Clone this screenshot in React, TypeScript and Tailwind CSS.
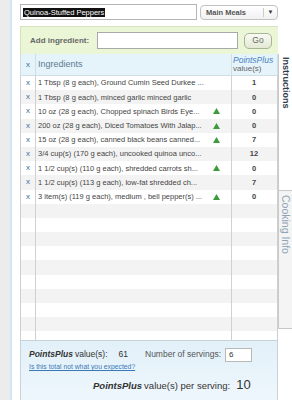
import React from "react";

type Row = { text: string; value: string; tri?: boolean };

const rows: Row[] = [
  { text: "1 Tbsp (8 g each), Ground Cumin Seed Durkee ...", value: "1" },
  { text: "1 Tbsp (8 g each), minced garlic minced garlic", value: "0" },
  { text: "10 oz (28 g each), Chopped spinach Birds Eye...", value: "0", tri: true },
  { text: "200 oz (28 g each), Diced Tomatoes With Jalap...", value: "0", tri: true },
  { text: "15 oz (28 g each), canned black beans canned...", value: "7", tri: true },
  { text: "3/4 cup(s) (170 g each), uncooked quinoa unco...", value: "12" },
  { text: "1 1/2 cup(s) (110 g each), shredded carrots sh...", value: "0", tri: true },
  { text: "1 1/2 cup(s) (113 g each), low-fat shredded ch...", value: "7" },
  { text: "3 item(s) (119 g each), medium , bell pepper(s) ...", value: "0", tri: true },
];

function Tri() {
  return (
    <svg width="7" height="6" viewBox="0 0 7 6" className="shrink-0">
      <polygon points="3.5,0 7,6 0,6" fill="#3d9b3d" />
    </svg>
  );
}

export default function App() {
  const empty = Array.from({ length: 10 });
  return (
    <div className="flex h-[400px] w-[292px] overflow-hidden bg-white font-['Liberation_Sans',Arial,sans-serif] text-[#444]">
      <div className="w-[10px] shrink-0 bg-[#ececec]" />
      <div className="w-[2px] shrink-0 bg-[#cfe7f5]" />
      <div className="w-[8px] shrink-0" />
      <div className="flex w-[272px] shrink-0 flex-col">
        {/* top row */}
        <div className="flex items-start pt-[4px]">
          <div className="flex h-[16px] w-[177px] items-center border border-[#b5b5b5] pl-[2px]">
            <span className="bg-[#111] px-[1px] text-[7.5px] leading-[9px] text-white">Quinoa-Stuffed Peppers</span>
          </div>
          <div className="ml-[3px] mt-[1px] flex h-[15px] w-[78px] items-center rounded-[4px] border border-[#c2c2c2] bg-gradient-to-b from-white to-[#f1f1f1]">
            <span className="flex-1 pl-[5px] text-[7.5px] font-bold text-[#555]">Main Meals</span>
            <div className="h-[9px] w-px bg-[#ccc]" />
            <span className="w-[13px] text-center text-[6px] text-[#333]">▼</span>
          </div>
        </div>
        {/* add ingredient */}
        <div className="mt-[6px] flex h-[28px] w-[258px] items-center border-l border-t border-[#d5e3bf] bg-[#ebf6d6]">
          <span className="ml-[9px] w-[67px] text-[8px] font-bold text-[#666]">Add ingredient:</span>
          <div className="h-[17px] w-[141px] border border-[#a9a9a9] bg-white" />
          <div className="ml-[6px] flex h-[16px] w-[28px] items-center justify-center rounded-[5px] border border-[#a8b39a] bg-gradient-to-b from-[#fafaf3] to-[#e2e9d4] text-[8.5px] text-[#666]">
            Go
          </div>
        </div>
        {/* table + tabs */}
        <div className="flex flex-1">
          <div className="flex w-[258px] flex-col">
            {/* header */}
            <div className="flex h-[22px] border-x border-b border-[#cfdde5] bg-[#e5f3fb]">
              <div className="flex w-[15px] items-center justify-center border-r border-[#cfdde5] text-[8px] text-[#3a6fa5]">x</div>
              <div className="flex w-[196px] items-center border-r border-[#cfdde5] pl-[2px] text-[9px] text-[#5d7d90]">Ingredients</div>
              <div className="flex flex-1 flex-col justify-center pl-[1px] leading-[8.5px]">
                <span className="text-[8.5px] italic text-[#4a84c0]">PointsPlus</span>
                <span className="text-[8px] text-[#666]">value(s)</span>
              </div>
            </div>
            {/* body */}
            <div className="flex h-[264px] flex-col overflow-hidden border-x border-[#cfcfcf]">
              {rows.map((r, i) => (
                <div key={i} className={`flex h-[14.2px] shrink-0 ${i % 2 === 1 ? "bg-[#f3f3f3]" : "bg-white"}`}>
                  <div className="flex w-[15px] items-center justify-center border-r border-[#d0d0d0] text-[8px] text-[#3a6fa5]">x</div>
                  <div className="flex w-[196px] items-center border-r border-[#d0d0d0] pl-[2px]">
                    <span className="flex-1 overflow-hidden whitespace-nowrap text-[7.5px] text-[#444]">{r.text}</span>
                    <div className="mr-[11px] flex w-[7px] justify-center">{r.tri && <Tri />}</div>
                  </div>
                  <div className="flex flex-1 items-center justify-center pr-[1px] text-[7.5px] font-bold text-[#444]">{r.value}</div>
                </div>
              ))}
              {empty.map((_, j) => {
                const i = j + rows.length;
                return (
                  <div key={`e${j}`} className={`flex h-[14.2px] shrink-0 ${i % 2 === 1 ? "bg-[#f3f3f3]" : "bg-white"}`}>
                    <div className="w-[15px] border-r border-[#d0d0d0]" />
                    <div className="w-[196px] border-r border-[#d0d0d0]" />
                    <div className="flex-1" />
                  </div>
                );
              })}
            </div>
            {/* footer */}
            <div className="flex flex-1 flex-col border-x border-t border-[#c8d2d8] bg-gradient-to-b from-[#e2f0f9] to-[#eef7fc] pl-[8px] text-[#333]">
              <div className="mt-[6px] flex h-[15px] items-center text-[8.5px]">
                <span className="font-bold italic">PointsPlus</span>
                <span className="ml-[2px]">value(s):</span>
                <span className="ml-[11px]">61</span>
                <span className="ml-[17px] text-[#555]">Number of servings:</span>
                <div className="ml-[4px] flex h-[14px] w-[27px] items-center border border-[#b9b9b9] bg-white pl-[3px] text-[8px]">6</div>
              </div>
              <div className="mt-[1px] text-[6.8px] leading-[8px] text-[#3b79b6] underline">Is this total not what you expected?</div>
              <div className="mt-[4px] flex items-baseline pl-[64px]">
                <span className="text-[9.5px] font-bold italic">PointsPlus</span>
                <span className="ml-[2px] text-[9.5px]">value(s) per serving:</span>
                <span className="ml-[6px] text-[13px]">10</span>
              </div>
            </div>
          </div>
          {/* tabs */}
          <div className="flex w-[14px] flex-col">
            <div className="flex h-[136px] justify-center border-l border-[#c9c9c9] bg-white pt-[3px]">
              <span className="text-[9px] font-bold text-[#2e3d4b] [writing-mode:vertical-rl]">Instructions</span>
            </div>
            <div className="flex h-[139px] justify-center border-b border-l border-t border-[#c9c9c9] bg-[#f4f4f4] pt-[4px]">
              <span className="text-[10.5px] text-[#8ea5b6] [writing-mode:vertical-rl]">Cooking Info</span>
            </div>
            <div className="flex-1" />
          </div>
        </div>
      </div>
    </div>
  );
}
